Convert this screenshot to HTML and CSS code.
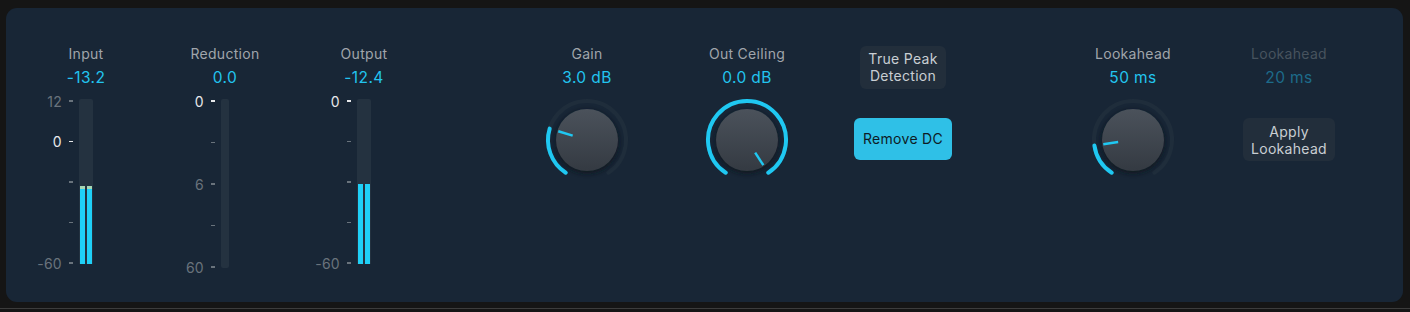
FILE: index.html
```html
<!DOCTYPE html>
<html lang="en">
<head>
    <meta charset="UTF-8">
    <title>Adaptive Limiter</title>
    <link rel="stylesheet" href="styles.css">
</head>
<body>

    <div class="panel">

        <!-- meters -->
        <div class="meters">
            <div class="col">
                <div class="label">Input</div>
                <div class="value">-13.2</div>
                <div class="meter">
                    <div class="scale">
                        <div class="tick"><span>12</span><i></i></div>
                        <div class="tick zero"><span>0</span><i></i></div>
                        <div class="tick"><span></span><i></i></div>
                        <div class="tick"><span></span><i></i></div>
                        <div class="tick"><span>-60</span><i></i></div>
                    </div>
                    <div class="track">
                        <div class="fill peak" style="height: 78px"></div>
                        <div class="fill peak" style="height: 78px"></div>
                    </div>
                </div>
            </div>
            <div class="col">
                <div class="label">Reduction</div>
                <div class="value">0.0</div>
                <div class="meter thin">
                    <div class="scale">
                        <div class="tick zero"><span>0</span><i></i></div>
                        <div class="tick"><span></span><i></i></div>
                        <div class="tick"><span>6</span><i></i></div>
                        <div class="tick"><span></span><i></i></div>
                        <div class="tick"><span>60</span><i></i></div>
                    </div>
                    <div class="track"></div>
                </div>
            </div>
            <div class="col">
                <div class="label">Output</div>
                <div class="value">-12.4</div>
                <div class="meter">
                    <div class="scale">
                        <div class="tick zero"><span>0</span><i></i></div>
                        <div class="tick"><span></span><i></i></div>
                        <div class="tick"><span></span><i></i></div>
                        <div class="tick"><span></span><i></i></div>
                        <div class="tick"><span>-60</span><i></i></div>
                    </div>
                    <div class="track">
                        <div class="fill" style="height: 80px"></div>
                        <div class="fill" style="height: 80px"></div>
                    </div>
                </div>
            </div>
        </div>

        <!-- gain / ceiling -->
        <div class="col gain-col">
            <div class="label">Gain</div>
            <div class="value">3.0 dB</div>
            <svg class="knob" width="90" height="90" viewBox="0 0 90 90">
                <defs>
                    <linearGradient id="knobFace" x1="0" y1="0" x2="0" y2="1">
                        <stop offset="0" stop-color="#4b525b"/>
                        <stop offset="1" stop-color="#343a42"/>
                    </linearGradient>
                    <filter id="knobBlur" x="-30%" y="-30%" width="160%" height="160%">
                        <feGaussianBlur stdDeviation="2"/>
                    </filter>
                </defs>
                <path class="ring" d="M23.76 77.71 A39 39 0 1 1 66.24 77.71"/>
                <path class="arc" d="M23.76 77.71 A39 39 0 0 1 7.70 33.60"/>
                <circle cx="45" cy="47" r="32" class="shade" filter="url(#knobBlur)"/>
                <circle cx="45" cy="45" r="31" fill="url(#knobFace)"/>
                <line class="pointer" x1="16.31" y1="36.23" x2="30.66" y2="40.61"/>
            </svg>
        </div>
        <div class="col ceiling-col">
            <div class="label">Out Ceiling</div>
            <div class="value">0.0 dB</div>
            <svg class="knob" width="90" height="90" viewBox="0 0 90 90">
                <path class="ring" d="M23.76 77.71 A39 39 0 1 1 66.24 77.71"/>
                <path class="arc" d="M23.76 77.71 A39 39 0 1 1 66.24 77.71"/>
                <circle cx="45" cy="47" r="32" class="shade" filter="url(#knobBlur)"/>
                <circle cx="45" cy="45" r="31" fill="url(#knobFace)"/>
                <line class="pointer" x1="61.34" y1="70.16" x2="53.17" y2="57.58"/>
            </svg>
        </div>

        <!-- switches -->
        <div class="col buttons-col">
            <div class="btn two">True Peak<br>Detection</div>
            <div class="btn on">Remove DC</div>
        </div>

        <!-- lookahead -->
        <div class="col look-col">
            <div class="label">Lookahead</div>
            <div class="value">50 ms</div>
            <svg class="knob" width="90" height="90" viewBox="0 0 90 90">
                <path class="ring" d="M23.76 77.71 A39 39 0 1 1 66.24 77.71"/>
                <path class="arc" d="M23.76 77.71 A39 39 0 0 1 6.38 50.43"/>
                <circle cx="45" cy="47" r="32" class="shade" filter="url(#knobBlur)"/>
                <circle cx="45" cy="45" r="31" fill="url(#knobFace)"/>
                <line class="pointer" x1="15.29" y1="49.18" x2="30.15" y2="47.09"/>
            </svg>
        </div>
        <div class="col apply-col">
            <div class="label dim">Lookahead</div>
            <div class="value dim">20 ms</div>
            <div class="btn two apply">Apply<br>Lookahead</div>
        </div>

    </div>

    <div class="baseline"></div>

</body>
</html>
```

FILE: styles.css
```css
* {
    box-sizing: border-box;
    margin: 0;
    padding: 0;
}
body {
    font-family: Inter, "Noto Sans", sans-serif;
    letter-spacing: 0.3px;
    background-color: #151515;
    height: 312px;
    overflow: hidden;
}
.panel {
    display: flex;
    align-items: flex-start;
    margin: 8px 7px 0 6px;
    height: 294px;
    padding: 37px 0 0 11px;
    background-color: #182636;
    border-radius: 11px;
}
.baseline {
    margin-top: 6px;
    height: 1px;
    background-color: #3c3c3c;
}
.meters {
    display: flex;
    gap: 1px;
}
.col {
    width: 138px;
    display: flex;
    flex-direction: column;
    align-items: center;
}
.gain-col {
    margin-left: 85px;
}
.ceiling-col {
    margin-left: 22px;
}
.buttons-col {
    margin-left: 18px;
}
.look-col {
    margin-left: 92px;
}
.apply-col {
    margin-left: 18px;
}
.label {
    font-size: 14px;
    line-height: 18px;
    color: #a0a5ab;
}
.value {
    margin-top: 5px;
    font-size: 15.5px;
    line-height: 20px;
    color: #22c4ef;
    letter-spacing: 0.4px;
}
.label.dim {
    color: #47535e;
}
.value.dim {
    color: #1d6b8a;
}

/* meters */
.meter {
    margin-top: 11px;
    width: 100%;
    display: grid;
    grid-template-columns: 1fr 14px 1fr;
    align-items: start;
}
.meter.thin {
    grid-template-columns: 1fr 8px 1fr;
}
.scale {
    display: flex;
    flex-direction: column;
    justify-content: space-between;
    height: 176px;
    margin-top: -5px;
    padding-right: 6px;
}
.thin .scale {
    height: 180px;
}
.tick {
    display: flex;
    align-items: center;
    justify-content: flex-end;
    gap: 7px;
    height: 14px;
    font-size: 14px;
    color: #69737c;
}
.tick i {
    width: 4px;
    height: 1.5px;
    background-color: #69737c;
}
.tick.zero {
    color: #e6e8ea;
}
.tick.zero i {
    background-color: #e6e8ea;
}
.track {
    height: 165px;
    display: flex;
    align-items: flex-end;
    gap: 2px;
    padding: 0 1px;
    background-color: #243240;
    border-radius: 2px 2px 0 0;
}
.thin .track {
    height: 169px;
    border-radius: 2px;
}
.fill {
    width: 5px;
    background-color: #1fd0f7;
}
.fill.peak {
    border-top: 3px solid #a7d6b4;
}

/* knobs */
.knob {
    margin-top: 7px;
}
.ring {
    fill: none;
    stroke: #1f2d3b;
    stroke-width: 4;
    stroke-linecap: round;
}
.arc {
    fill: none;
    stroke: #1fc8f2;
    stroke-width: 4;
    stroke-linecap: round;
}
.shade {
    fill: #0d151d;
    opacity: 0.7;
}
.pointer {
    stroke: #1fc8f2;
    stroke-width: 2.5;
}

/* buttons */
.btn {
    font-size: 14px;
    color: #c9ced3;
    text-align: center;
    background-color: #222e3b;
    border-radius: 6px;
}
.btn.two {
    line-height: 17px;
    padding: 4px 8px 5px;
    margin-top: 1px;
}
.btn.on {
    margin-top: 29px;
    height: 42px;
    line-height: 42px;
    padding: 0 9px;
    color: #0e1b25;
    background-color: #2fc0e7;
}
.btn.apply {
    margin-top: 30px;
    padding: 5px 8px 4px;
}
```
